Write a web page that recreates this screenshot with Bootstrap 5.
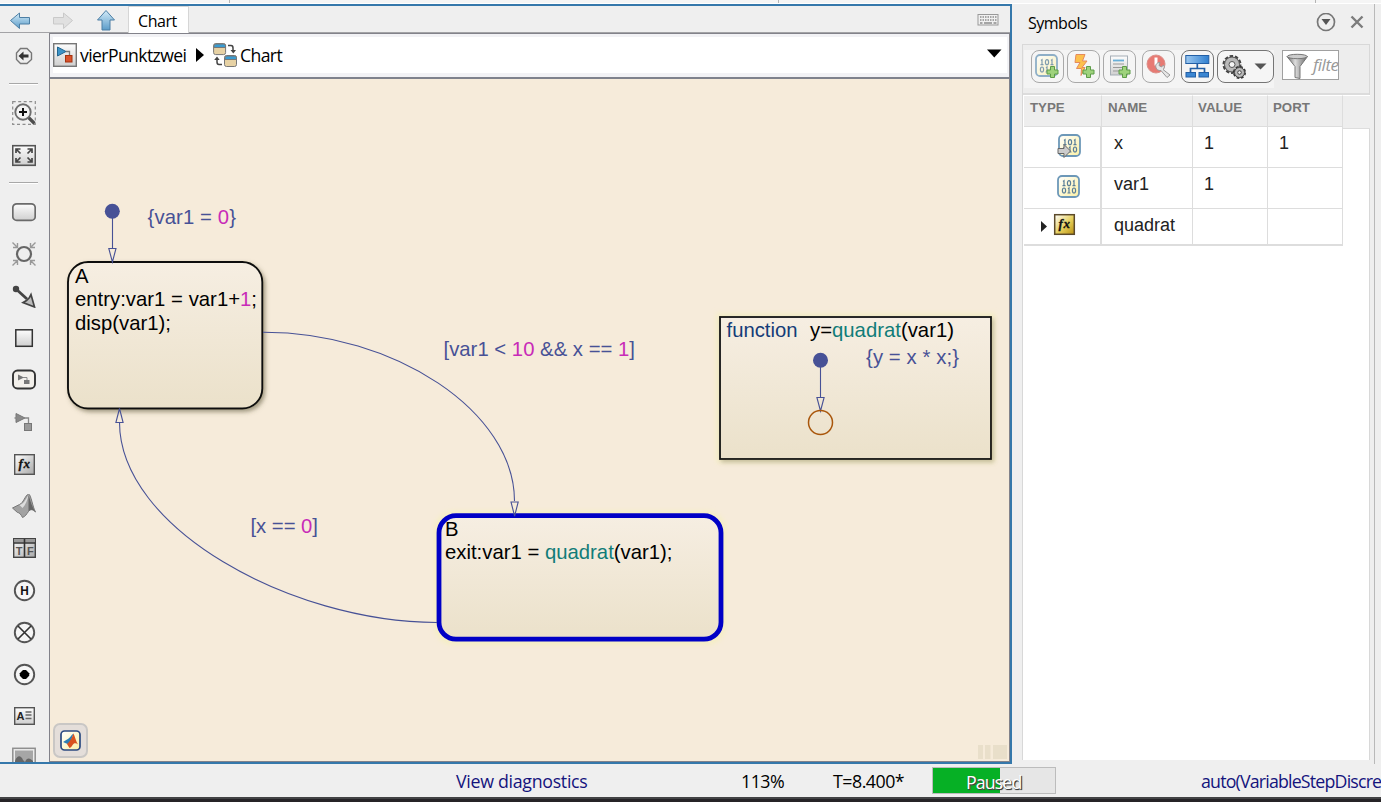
<!DOCTYPE html>
<html lang="en">
<head>
<meta charset="utf-8">
<meta name="viewport" content="width=device-width, initial-scale=1">
<title>vierPunktzwei - Chart</title>
<link href="https://cdn.jsdelivr.net/npm/bootstrap@5.3.0/dist/css/bootstrap.min.css" rel="stylesheet">
<style>
  body { font-family: "Open Sans", "Noto Sans", sans-serif; background: #efefef; color: #000; line-height: 1; width: 1381px; height: 802px; }
  svg { display: block; flex: none; }
  .top-strip { height: 4px; background: #f5f5f5; border-bottom: 1px solid #fff; padding-left: 229px; }
  .top-strip i { width: 1px; height: 3px; background: #b4b4b4; }
  .editor { width: 1012px; border: solid #3578ab; border-width: 2px 2px 2px 0; }
  .tabs-bar { height: 27px; border-bottom: 1px solid #a3a3a6; }
  .tab-on { width: 61px; height: 27px; background: #fff; border: 1px solid #d6d6d6; border-bottom: 0; font-size: 16px; letter-spacing: -.45px; line-height: 29px; padding-left: 9px; }
  .palette { width: 49px; padding-right: 1px; }
  .cell { height: 42px; flex: none; }
  .cell-first { height: 46px; }
  .rule { height: 2px; width: 29px; margin-left: 9px; background: #a8a8a8; border-bottom: 1px solid #fff; flex: none; }
  .rule-a { margin-top: 4px; margin-bottom: 7px; }
  .rule-b { margin-top: 6px; margin-bottom: 7px; }
  .work { border: solid #82828a; border-width: 1px 1px 1px 1px; }
  .crumbs { height: 45px; background: #f2f2f5; border-bottom: 2px solid #7f828c; padding: 3px 2px 4px 3px; }
  .crumbs > div { background: #fff; height: 36px; font-size: 17.6px; letter-spacing: -.6px; }
  .crumbs span { padding-top: 2px; }
  .canvas { background: #f6ebda; }
  .canvas text { font-family: "Liberation Sans", Arial, sans-serif; font-size: 20.3px; white-space: pre; }
  .k { fill: #000; } .b { fill: #475196; } .m { fill: #c82bb8; } .t { fill: #107c78; } .n { fill: #143c78; }
  .logo-btn { left: 3px; bottom: 3px; width: 35px; height: 35px; background: #e4deda; border: 2px solid #c9c7c5; border-radius: 7px; }
  .side { width: 363px; border-right: 1px solid #b9b9b9; }
  .side-title { height: 40px; font-size: 16px; letter-spacing: -.5px; padding: 0 7px 3px 16px; }
  .panel { margin: 0 5px 4px 10px; background: #fff; width: 348px; border: 1px solid #d8d8d8; border-bottom: 0; }
  .tools { height: 50px; background: #ededed; border-bottom: 2px solid #dcdcdc; padding: 5px 0 0 1px; }
  .tools-in { background: #f4f4f4; height: 38px; width: 250px; padding-left: 7px; }
  .tb { width: 33px; height: 33px; border: 1px solid #a9a9a9; border-radius: 8px; background: #f5f5f5; margin-right: 3px; padding: 0; }
  .tb.on { border-color: #757575; }
  .filt { width: 57px; height: 30px; border: 1px solid #a0a0a0; background: #fff; margin-left: 8px; overflow: hidden; font: italic 17px "Open Sans", sans-serif; color: #999; }
  .sym { display: grid; grid-template-columns: 78px 91px 75px 75px 27px; grid-template-rows: 32px 41px 41px 37px; font: 18px "Liberation Sans", Arial, sans-serif; color: #222; padding-left: 1px; }
  .sym > div { border: solid #ddd; border-width: 0 1px 1px 0; padding: 6px 0 0 12px; }
  .sym > .one { padding-left: 11px; }
  .sym > .h { background: #eee; font: bold 13.3px "Liberation Sans", sans-serif; color: #777; padding: 4px 0 0 6px; border-top: 1px solid #fff; }
  .sym > .v { border: 0; padding: 0; }
  .sym > .tp { padding: 7px 18px 0 0; border-right-width: 2px; }
  .sym > .last { border-bottom-width: 2px; }
  .status { height: 33px; font-size: 17.8px; letter-spacing: -.5px; }
  .status > * { flex: none; }
  .status > span { padding-top: 2px; }
  .status .navy { color: #14147d; letter-spacing: -.3px; }
  .status .solver { letter-spacing: -.82px; }
  .run { width: 124px; height: 27px; background: #e6e6e6; border: 1px solid #bcbcbc; border-radius: 0; font-size: 17.8px; }
  .run .progress-bar { background: #06b025; }
  .run-label { inset: 0; color: #fff; text-shadow: 1px 1px 1px #333, 1px 1px 0 #777; line-height: 28px; padding-left: 33px; letter-spacing: -.9px; }
  .edge { height: 5px; background: #262427; border-top: 2px solid #434345; }
</style>
</head>
<body class="overflow-hidden d-flex flex-column">

<svg width="0" height="0" class="position-absolute">
  <defs>
    <linearGradient id="gBlue" x1="0" y1="0" x2="0" y2="1"><stop offset="0" stop-color="#d3ebf8"/><stop offset="1" stop-color="#5b9cc9"/></linearGradient>
    <linearGradient id="gGrey" x1="0" y1="0" x2="0" y2="1"><stop offset="0" stop-color="#fdfdfd"/><stop offset="1" stop-color="#cfcfcf"/></linearGradient>
    <linearGradient id="gDiag" x1="0" y1="0" x2="1" y2="1"><stop offset="0" stop-color="#fff"/><stop offset="1" stop-color="#a8a8a8"/></linearGradient>
    <linearGradient id="gNode" x1="0" y1="0" x2="0" y2="1"><stop offset="0" stop-color="#f6eee2"/><stop offset="1" stop-color="#ebe1ca"/></linearGradient>
    <linearGradient id="gData" x1="0" y1="0" x2="1" y2="1"><stop offset="0" stop-color="#fff"/><stop offset="1" stop-color="#fbf0a4"/></linearGradient>
    <linearGradient id="gGold" x1="0" y1="0" x2="1" y2="1"><stop offset="0" stop-color="#fff"/><stop offset=".55" stop-color="#e6cf5a"/><stop offset="1" stop-color="#b98f10"/></linearGradient>
    <linearGradient id="gTree" x1="0" y1="0" x2="1" y2="0"><stop offset="0" stop-color="#9cc8f0"/><stop offset="1" stop-color="#2f7fd0"/></linearGradient>
    <linearGradient id="gFun" x1="0" y1="0" x2="1" y2="0"><stop offset="0" stop-color="#666"/><stop offset=".4" stop-color="#ddd"/><stop offset="1" stop-color="#666"/></linearGradient>
    <g id="plus"><path d="M3.500 0h4v3.500h3.500v4h-3.500v3.500h-4v-3.500h-3.500v-4h3.500z" fill="#9ed27c" stroke="#5d9c48"/></g>
    <g id="bits"><rect x="1" y="1" width="21" height="21" rx="4" fill="url(#gData)" stroke="#6d98b8" stroke-width="1.800"/>
      <g fill="none" stroke="#5a7f98" stroke-width="1.200"><path d="M6 6.500l1-.8v5M5.500 10.700h3M16 6.500l1-.8v5M15.500 10.700h3M11 13.800l1-.8v5M10.500 18h3"/><ellipse cx="12" cy="8.200" rx="1.600" ry="2.500"/><ellipse cx="7" cy="15.500" rx="1.600" ry="2.500"/><ellipse cx="17" cy="15.500" rx="1.600" ry="2.500"/></g></g>
  </defs>
</svg>

<div class="top-strip d-flex"><i></i><i style="margin-left:548px"></i><i style="margin-left:536px"></i></div>

<div class="d-flex" style="height:760px">
  <main class="editor d-flex flex-column">
    <div class="tabs-bar d-flex align-items-start flex-shrink-0">
      <svg width="128" height="27" viewBox="0 6 128 27">
        <path d="M10.500 20.500l9-7.500v4.500h10v6.500h-10v4.500z" fill="url(#gBlue)" stroke="#4d7fa5"/>
        <path d="M72.500 20.500l-9-7.500v4.500h-10v6.500h10v4.500z" fill="#e0e0e0" stroke="#c9c9c9"/>
        <path d="M106 10.500l8.500 9.500h-4.500v10h-8v-10h-4.500z" fill="url(#gBlue)" stroke="#4d7fa5"/>
      </svg>
      <div class="tab-on">Chart</div>
      <svg class="ms-auto" style="margin-right:10px" width="24" height="26" viewBox="976 6 24 26">
        <rect x="978" y="14.500" width="20" height="10.500" fill="#f0f0f0" stroke="#999"/>
        <path d="M980 17h17M980 20h17" stroke="#8c8c8c" stroke-width="1.500" stroke-dasharray="1.500 1"/><path d="M980 23h2.500M984 23h8M993.500 23h3" stroke="#8c8c8c" stroke-width="1.300"/>
      </svg>
    </div>

    <div class="d-flex flex-fill" style="min-height:0">
      <nav class="palette d-flex flex-column overflow-hidden flex-shrink-0">
        <div class="cell cell-first d-flex justify-content-center align-items-center"><svg width="24" height="24"><path d="M8.500 4.500h6.500l4.500 4.500v6.500l-4.500 4h-6.500l-4-4v-6.500z" fill="#eee" stroke="#777" stroke-width="1.400"/><path d="M6.500 12l5-4.500v3h5v3h-5v3z" fill="#333"/></svg></div>
        <div class="rule rule-a"></div>
        <div class="cell d-flex justify-content-center align-items-center"><svg width="24" height="24"><rect x=".7" y=".7" width="22.600" height="22.600" fill="none" stroke="#8d8d8d" stroke-width="1.200" stroke-dasharray="3 2.500"/><path d="M16.500 16.500l6 6" stroke="#4d4d4d" stroke-width="3.200"/><circle cx="11" cy="11" r="7.700" fill="#f4f4f4" stroke="#6e6e6e" stroke-width="1.900"/><path d="M7 11h8M11 7v8" stroke="#111" stroke-width="2"/></svg></div>
        <div class="cell d-flex justify-content-center align-items-center"><svg width="24" height="24"><rect x=".7" y="2.700" width="22.600" height="19.600" fill="url(#gGrey)" stroke="#555" stroke-width="1.600"/><g stroke="#444" stroke-width="1.700" fill="none"><path d="M8.500 10.500l-4-4M4 10v-4h4.500M15.500 10.500l4-4M20 10v-4h-4.500M8.500 14.500l-4 4M4 15v4h4.500M15.500 14.500l4 4M20 15v4h-4.500"/></g></svg></div>
        <div class="rule rule-b"></div>
        <div class="cell d-flex justify-content-center align-items-center"><svg width="24" height="24"><rect x=".8" y="3.800" width="22.400" height="16.600" rx="4" fill="url(#gGrey)" stroke="#6a6a6a" stroke-width="1.700"/></svg></div>
        <div class="cell d-flex justify-content-center align-items-center"><svg width="24" height="24"><g stroke="#999" stroke-width="1.400" fill="none"><path d="M.5.500l5 5M5.500 1v4.500h-4.500M23.500.500l-5 5M18.500 1v4.500h4.500M.5 23.500l5-5M5.500 23v-4.500h-4.500M23.500 23.500l-5-5M18.500 23v-4.500h4.500"/></g><circle cx="12" cy="12" r="7" fill="#eee" stroke="#666" stroke-width="2.200"/></svg></div>
        <div class="cell d-flex justify-content-center align-items-center"><svg width="24" height="24"><circle cx="4" cy="5" r="3.200" fill="#444"/><path d="M4 5l11 10" stroke="#444" stroke-width="2.800"/><path d="M22.500 23l-11.500-4.500 3.500-2 3-3 1.500-3z" fill="#bbb" stroke="#444" stroke-width="1.700"/></svg></div>
        <div class="cell d-flex justify-content-center align-items-center"><svg width="24" height="24"><rect x="3.800" y="3.800" width="16.500" height="16.500" fill="url(#gGrey)" stroke="#333" stroke-width="1.500"/></svg></div>
        <div class="cell d-flex justify-content-center align-items-center"><svg width="24" height="24"><rect x="1" y="2.500" width="22" height="18" rx="4.500" fill="#f3f0eb" stroke="#333" stroke-width="1.900"/><path d="M6 6.500l6 3-6 3z" fill="#777"/><path d="M11 9.500h4v3" fill="none" stroke="#888"/><rect x="12" y="12" width="5.500" height="4" fill="#777"/></svg></div>
        <div class="cell d-flex justify-content-center align-items-center"><svg width="24" height="24"><path d="M4 3.500l9 4.500-9 4.500z" fill="#8a8a8a" stroke="#777"/><path d="M2.500 8h3M12 8h4.500v5" fill="none" stroke="#888" stroke-width="1.300"/><rect x="12.500" y="13.500" width="7" height="7" fill="#9a9a9a" stroke="#777"/></svg></div>
        <div class="cell d-flex justify-content-center align-items-center"><svg width="24" height="24"><rect x="2.700" y="2.700" width="19.600" height="19.600" fill="url(#gDiag)" stroke="#555" stroke-width="1.400"/><text x="6.500" y="15.500" font-family="Liberation Serif, serif" font-style="italic" font-weight="bold" font-size="13" textLength="11.500" fill="#111" stroke="#111" stroke-width=".3">fx</text></svg></div>
        <div class="cell d-flex justify-content-center align-items-center"><svg width="24" height="24"><path d="M.5 14l7-3.500c4-1.500 5.500-9 9-10.500 2.500 0 4 13 7 18-3-3-5-3-7-.5-2 2.500-3 5-6 6-1.500-3-3-5-5-5z" fill="#a2a2a2" stroke="#777"/><path d="M16.500 1c-3 5-5 9-9 10l3 3c3-3 5-8 6-13z" fill="#ddd"/><path d="M16.500 1c1.500 4 3 11 7 17-3-3-5-3-7-.5z" fill="#666"/></svg></div>
        <div class="cell d-flex justify-content-center align-items-center"><svg width="24" height="24"><rect x="1.700" y="2.700" width="21.600" height="18.600" fill="url(#gDiag)" stroke="#444" stroke-width="1.400"/><rect x="2" y="3" width="21" height="3.500" fill="#999"/><path d="M2 7h21M12.500 3v18" stroke="#333" stroke-width="1.600"/><g font-family="Liberation Sans, sans-serif" font-size="11" font-weight="bold" fill="#555"><text x="3.700" y="18.500" textLength="6.500">T</text><text x="15" y="18.500" textLength="6">F</text></g></svg></div>
        <div class="cell d-flex justify-content-center align-items-center"><svg width="24" height="24"><circle cx="12.500" cy="12.500" r="9.700" fill="#f6f6f6" stroke="#555" stroke-width="1.900"/><text x="8.200" y="17" font-family="Liberation Sans, sans-serif" font-size="12.500" font-weight="bold" fill="#111" textLength="8.500" lengthAdjust="spacingAndGlyphs">H</text></svg></div>
        <div class="cell d-flex justify-content-center align-items-center"><svg width="24" height="24"><circle cx="12.500" cy="12.500" r="9.700" fill="#f6f6f6" stroke="#555" stroke-width="1.900"/><path d="M6 6l13 13M19 6l-13 13" stroke="#333" stroke-width="1.600"/></svg></div>
        <div class="cell d-flex justify-content-center align-items-center"><svg width="24" height="24"><circle cx="12.500" cy="12.500" r="9.700" fill="#f6f6f6" stroke="#555" stroke-width="1.900"/><path d="M11 8h3l3.200 3.200v2.600l-3.200 3.200h-3l-3.200-3.200v-2.600z" fill="#000"/></svg></div>
        <div class="cell d-flex justify-content-center align-items-center"><svg width="24" height="24"><rect x="2.700" y="3.700" width="19.600" height="16.600" fill="url(#gGrey)" stroke="#555" stroke-width="1.400"/><text x="4.500" y="15.500" font-family="Liberation Sans, sans-serif" font-size="11" font-weight="bold" fill="#222">A</text><path d="M13.500 8h6M13.500 11h6M13.500 14.500h6" stroke="#666" stroke-width="1.300"/></svg></div>
        <div class="cell d-flex justify-content-center align-items-center"><svg width="24" height="24"><rect x=".8" y="2.300" width="22.400" height="20" fill="#ececec" stroke="#8f8f8f" stroke-width="1.500"/><rect x="3" y="4.500" width="18" height="17" fill="#a6a6a6"/><path d="M3 15c2-6 6-6 8-1l2 2c2-5 5-4 8-1v7H3z" fill="#666"/></svg></div>
      </nav>

      <section class="work d-flex flex-column flex-fill position-relative">
        <div class="crumbs flex-shrink-0">
          <div class="d-flex align-items-center">
            <svg width="24" height="24"><rect x=".7" y=".7" width="22.600" height="22.600" fill="url(#gGrey)" stroke="#777" stroke-width="1.400"/><path d="M4.500 4l8.500 4.500-8.500 4.500z" fill="#3d94c8" stroke="#22658f" /><path d="M13 8.500h3.500v4" fill="none" stroke="#777" stroke-width="1.300"/><rect x="12.500" y="12.500" width="6.500" height="6.500" fill="#d8512b" stroke="#a5330f"/></svg>
            <span style="margin-left:3px;width:116px">vierPunktzwei</span>
            <svg width="17" height="24"><path d="M0 5l8 7-8 7z"/></svg>
            <svg width="24" height="24"><g stroke="#777"><rect x=".6" y=".6" width="12" height="11" rx="2" fill="#e7d2a4"/><path d="M1 4.500v-2q0-1.500 2-1.500h7.500q2 0 2 1.500v2z" fill="#3a9bd0"/><rect x="11.500" y="12.500" width="12" height="11" rx="2" fill="#e7d2a4"/><path d="M12 16.500v-2q0-1.500 2-1.500h7.500q2 0 2 1.500v2z" fill="#3a9bd0"/></g><path d="M15 2.500h3q2 0 2 2.500v3M9 21.500h-3q-2 0-2-2.500v-3" fill="none" stroke="#444" stroke-width="1.500"/><path d="M17.500 7h5.500l-2.700 3.500zM1.200 17h5.500l-2.700-3.500z" fill="#444"/></svg>
            <span style="margin-left:3px">Chart</span>
            <svg class="ms-auto" width="20" height="24"><path d="M0 6.500h14.500l-7.200 8z"/></svg>
          </div>
        </div>
        <div class="canvas flex-fill overflow-hidden">
          <svg width="959" height="682" viewBox="50 79 959 682">
            <defs>
              <filter id="sh" x="-10%" y="-10%" width="125%" height="125%"><feDropShadow dx="2" dy="2.500" stdDeviation="2" flood-color="#5a5236" flood-opacity=".55"/></filter>
              <filter id="shSoft" x="-10%" y="-10%" width="125%" height="125%"><feDropShadow dx="2" dy="2.500" stdDeviation="2" flood-color="#8a8060" flood-opacity=".45"/></filter>
              <filter id="halo" x="-10%" y="-15%" width="120%" height="130%"><feGaussianBlur stdDeviation="2.500"/></filter>
            </defs>
            <rect x="68" y="262" width="194.300" height="146.500" rx="20" fill="url(#gNode)" stroke="#111" stroke-width="1.900" filter="url(#sh)"/>
            <rect x="434" y="511" width="292" height="134" rx="20" fill="#f5eec4" filter="url(#halo)"/>
            <rect x="439" y="515.700" width="282" height="123.500" rx="17" fill="url(#gNode)" stroke="#0000c6" stroke-width="4.800"/>
            <rect x="716" y="313" width="279" height="150" fill="#f5eec8" filter="url(#halo)"/>
            <rect x="720" y="317" width="271" height="142" fill="url(#gNode)" stroke="#111" stroke-width="1.800" filter="url(#shSoft)"/>
            <g fill="none" stroke="#475196" stroke-width="1.100">
              <path d="M112.500 212v36M108.800 248.500h7.200l-3.600 13.500z"/>
              <path d="M263 332.300C395 332 514.500 412 514.500 501M511 502h7.200l-3.600 14z"/>
              <path d="M437 622.500C290 622 119.500 528 119.500 422M115.900 422.500h7.200l-3.600-14z"/>
              <path d="M820.500 361v36M816.900 397.500h7.200l-3.600 13.500z"/>
            </g>
            <circle cx="112.300" cy="211.200" r="7.500" fill="#475196"/>
            <circle cx="820.500" cy="360.300" r="7.500" fill="#475196"/>
            <circle cx="820.500" cy="422.500" r="12" fill="none" stroke="#a9560b" stroke-width="1.500"/>
            <text x="147.500" y="224" class="b" textLength="88.500">{var1 = <tspan class="m">0</tspan>}</text>
            <text x="75" y="283" class="k">A</text>
            <text x="75" y="306" class="k" textLength="182">entry:var1 = var1+<tspan class="m">1</tspan>;</text>
            <text x="75" y="330" class="k" textLength="96">disp(var1);</text>
            <text x="443.500" y="356" class="b" textLength="191.500">[var1 &lt; <tspan class="m">10</tspan> &amp;&amp; x == <tspan class="m">1</tspan>]</text>
            <text x="250.500" y="533" class="b" textLength="67.500">[x == <tspan class="m">0</tspan>]</text>
            <text x="445" y="536" class="k">B</text>
            <text x="445" y="559" class="k" textLength="227.500">exit:var1 = <tspan class="t">quadrat</tspan>(var1);</text>
            <text x="726.500" y="337" class="n" textLength="71">function</text>
            <text x="810" y="337" class="k" textLength="144">y=<tspan class="t">quadrat</tspan>(var1)</text>
            <text x="866" y="364" class="b" textLength="93">{y = x * x;}</text>
            <path d="M978 745h5v14h-5zM985 745h5.500v14h-5.500zM993 745h14v14h-14z" fill="#e9dfca"/>
          </svg>
        </div>
        <div class="logo-btn position-absolute d-flex align-items-center justify-content-center">
          <svg width="21" height="21"><rect x="1" y="1" width="19" height="19" rx="3.500" fill="url(#gData)" stroke="#2b4a80" stroke-width="1.700"/><path d="M3 12l4-2.500c3-1 4-4.500 6.500-6l-4 12-2-1.500z" fill="#2d7fb5"/><path d="M13.500 3.500c1.500 3 2.500 8 4.500 11-2-2-4-1.500-5 0s-2 3-3.500 3.500l-2.500-4c3-2.500 5-6 6.500-10.500z" fill="#d9531e"/></svg>
        </div>
      </section>
    </div>
  </main>

  <aside class="side d-flex flex-column">
    <div class="side-title d-flex align-items-center">
      <span>Symbols</span>
      <svg class="ms-auto" width="52" height="20" viewBox="1315 13 52 20"><circle cx="1326" cy="22" r="8.500" fill="none" stroke="#777" stroke-width="1.700"/><path d="M1321.500 19h9l-4.500 6z" fill="#555"/><path d="M1351.500 16.500l11 11M1362.500 16.500l-11 11" stroke="#7c7c7c" stroke-width="2.400"/></svg>
    </div>
    <div class="panel flex-fill">
      <div class="tools d-flex">
        <div class="tools-in d-flex">
          <button class="tb d-flex align-items-center justify-content-center"><svg width="25" height="25"><g opacity=".75"><use href="#bits"/></g><use href="#plus" x="12" y="12.500"/></svg></button>
          <button class="tb d-flex align-items-center justify-content-center"><svg width="25" height="25"><path d="M5 .5h9l-2.500 6.500h4.500l-5 6.500h3l-4 8 .5-7h-5l3.500-6h-5z" fill="#fcc04c" stroke="#e58a5c"/><use href="#plus" x="12" y="12.500"/></svg></button>
          <button class="tb d-flex align-items-center justify-content-center" style="margin-right:6px"><svg width="25" height="25"><rect x="3.500" y="2" width="17" height="19" fill="url(#gGrey)" stroke="#a5adb5"/><path d="M6 6.500h11" stroke="#68afd8" stroke-width="1.800"/><path d="M6 10h11M6 13.500h9M6 17h6" stroke="#999"/><use href="#plus" x="12" y="12.500"/></svg></button>
          <button class="tb d-flex align-items-center justify-content-center" style="margin-right:6px"><svg width="25" height="25"><circle cx="10" cy="10" r="9" fill="#e77a73" stroke="#dc908a"/><path d="M10 3.500v8" stroke="#fff" stroke-width="3"/><path d="M10 13.500c-1-3 1-5 4-5l-1 3 2.500 1.500 2-2c1.500 2 .5 4-.5 4.500l7 5.500-3 2.500-6-7c-2.500.500-4.500-1-5-3z" fill="#e6e6e6" stroke="#999"/></svg></button>
          <button class="tb on d-flex align-items-center justify-content-center"><svg width="25" height="25"><g stroke="#235fa5"><rect x=".8" y="1.500" width="23" height="8" fill="url(#gTree)"/><path d="M12.300 10v4.500M5.500 18v-3.500h14v3.500" fill="none" stroke-width="1.700"/><rect x="1" y="18.500" width="9.500" height="4.500" fill="#3b86d2"/><rect x="14" y="18.500" width="9.500" height="4.500" fill="#3b86d2"/></g></svg></button>
          <button class="tb on d-flex align-items-center flex-shrink-0" style="width:57px;margin:0;padding-left:4px"><svg width="48" height="26"><circle cx="10" cy="10.500" r="8" fill="#b5b5b5" stroke="#444" stroke-width="3" stroke-dasharray="3.300 1.730"/><circle cx="10" cy="10.500" r="7.500" fill="#b9b9b9" stroke="#555"/><circle cx="10" cy="10.500" r="3" fill="#f5f5f5" stroke="#555"/><circle cx="17.500" cy="18.500" r="5.300" fill="#aaa" stroke="#333" stroke-width="2.500" stroke-dasharray="2.500 1.660"/><circle cx="17.500" cy="18.500" r="5" fill="#b9b9b9" stroke="#444"/><circle cx="17.500" cy="18.500" r="1.800" fill="#f5f5f5" stroke="#444"/><path d="M32.500 9.500h12l-6 6z" fill="#555"/></svg></button>
        </div>
        <div class="filt d-flex"><svg width="28" height="28"><path d="M4 5.500l8 10v11l5 1v-12l7.500-10z" fill="url(#gFun)" stroke="#777"/><ellipse cx="14.200" cy="5.500" rx="10" ry="2.200" fill="#ccc" stroke="#777"/></svg><span style="padding:2px 0 0 2px;letter-spacing:-.5px">filte</span></div>
      </div>
      <div class="sym">
        <div class="h">TYPE</div><div class="h">NAME</div><div class="h" style="padding-left:5px">VALUE</div><div class="h" style="padding-left:5px">PORT</div><div class="h" style="height:34px;border-right:0"></div>
        <div class="tp d-flex justify-content-end"><svg width="25" height="25"><g transform="translate(1 0)"><use href="#bits"/></g><path d="M1 14.500h6v-4l6.500 6.500-6.500 6.500v-4h-6z" fill="#ccc" stroke="#666"/></svg></div><div>x</div><div class="one">1</div><div class="one">1</div><div class="v"></div>
        <div class="tp d-flex justify-content-end" style="padding-top:7px"><svg width="25" height="25"><use href="#bits"/></svg></div><div>var1</div><div class="one">1</div><div></div><div class="v"></div>
        <div class="tp last d-flex justify-content-end" style="padding:4px 24px 0 0"><svg width="36" height="24"><path d="M1 8l6 5.500-6 5.500z" fill="#222"/><rect x="14.700" y="1.700" width="19.600" height="19.600" fill="url(#gGold)" stroke="#5c4a2a" stroke-width="1.500"/><text x="18.500" y="14.500" font-family="Liberation Serif, serif" font-style="italic" font-weight="bold" font-size="13" textLength="11.500" fill="#111" stroke="#111" stroke-width=".3">fx</text></svg></div><div class="last">quadrat</div><div class="last"></div><div class="last"></div><div class="v"></div>
      </div>
    </div>
  </aside>
</div>

<footer class="status d-flex align-items-center flex-shrink-0 text-nowrap overflow-hidden">
  <span class="navy" style="margin-left:456px;width:285px">View diagnostics</span>
  <span style="width:92px">113%</span>
  <span style="width:99px">T=8.400*</span>
  <div class="progress run position-relative">
    <div class="progress-bar" style="width:55%"></div>
    <span class="run-label position-absolute">Paused</span>
  </div>
  <span class="navy solver" style="margin-left:145px">auto(VariableStepDiscre</span>
</footer>
<div class="edge flex-shrink-0"></div>

<script src="https://cdn.jsdelivr.net/npm/bootstrap@5.3.0/dist/js/bootstrap.bundle.min.js"></script>
</body>
</html>
